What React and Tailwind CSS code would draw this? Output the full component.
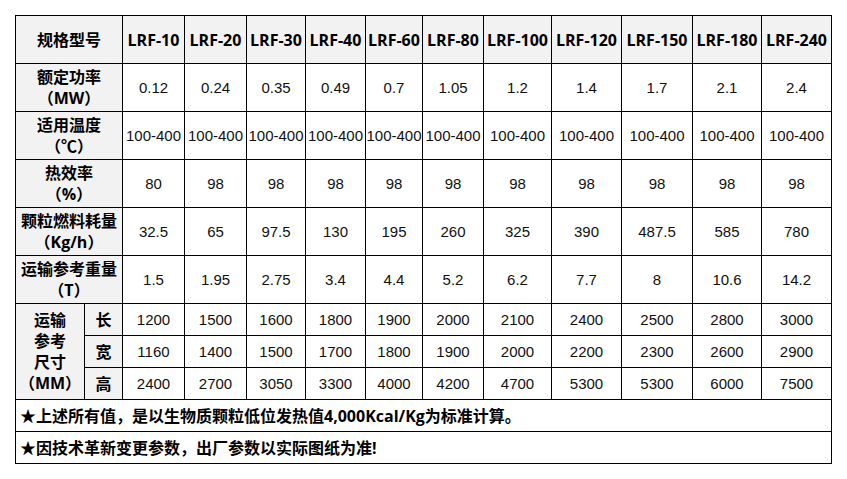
import React from "react";

const models = ["LRF-10","LRF-20","LRF-30","LRF-40","LRF-60","LRF-80","LRF-100","LRF-120","LRF-150","LRF-180","LRF-240"];
const rows = [
  { l1: "额定功率", l2: "（MW）", v: ["0.12","0.24","0.35","0.49","0.7","1.05","1.2","1.4","1.7","2.1","2.4"] },
  { l1: "适用温度", l2: "（℃）", v: Array(11).fill("100-400") },
  { l1: "热效率", l2: "（%）", v: ["80","98","98","98","98","98","98","98","98","98","98"] },
  { l1: "颗粒燃料耗量", l2: "（Kg/h）", v: ["32.5","65","97.5","130","195","260","325","390","487.5","585","780"] },
  { l1: "运输参考重量", l2: "（T）", v: ["1.5","1.95","2.75","3.4","4.4","5.2","6.2","7.7","8","10.6","14.2"] },
];
const dims = [
  { k: "长", v: ["1200","1500","1600","1800","1900","2000","2100","2400","2500","2800","3000"] },
  { k: "宽", v: ["1160","1400","1500","1700","1800","1900","2000","2200","2300","2600","2900"] },
  { k: "高", v: ["2400","2700","3050","3300","4000","4200","4700","5300","5300","6000","7500"] },
];

const bold = "font-['Open_Sans','Noto_Sans_CJK_SC',sans-serif] font-bold text-[16px] text-black";
const data = "bg-white flex items-center justify-center pt-[2px] font-['Liberation_Sans','Noto_Sans_CJK_SC',sans-serif] text-[15px] text-[#111] whitespace-nowrap";
const label = "bg-[#f2f2f2] flex flex-col items-center justify-center pt-px text-center leading-[21px] " + bold;

export default function App() {
  return (
    <div className="w-[847px] h-[479px] bg-white pt-[15px] pl-[15px]">
      <div className="inline-grid bg-black p-px gap-px grid-cols-[68px_37px_61px_61px_58px_59px_56px_60px_67px_69px_70px_68px_69px] grid-rows-[47px_47px_47px_47px_47px_47px_31px_31px_31px_31px_31px]">
        <div className={label + " col-span-2"}>规格型号</div>
        {models.map((m) => (
          <div key={m} className={"bg-[#f2f2f2] flex items-center justify-center pt-px whitespace-nowrap " + bold}>{m}</div>
        ))}
        {rows.map((r) => (
          <React.Fragment key={r.l1}>
            <div className={label + " col-span-2"}>
              <span>{r.l1}</span>
              <span>{r.l2}</span>
            </div>
            {r.v.map((x, i) => (
              <div key={i} className={data}>{x}</div>
            ))}
          </React.Fragment>
        ))}
        <div className={label + " row-span-3"}>
          <span>运输</span>
          <span>参考</span>
          <span>尺寸</span>
          <span>（MM）</span>
        </div>
        {dims.map((d) => (
          <React.Fragment key={d.k}>
            <div className={label}>{d.k}</div>
            {d.v.map((x, i) => (
              <div key={i} className={data}>{x}</div>
            ))}
          </React.Fragment>
        ))}
        <div className={"col-span-full bg-white flex items-center pl-[4px] pt-px whitespace-nowrap " + bold}>
          ★上述所有值，是以生物质颗粒低位发热值4,000Kcal/Kg为标准计算。
        </div>
        <div className={"col-span-full bg-white flex items-center pl-[4px] pt-px whitespace-nowrap " + bold}>
          ★因技术革新变更参数，出厂参数以实际图纸为准!
        </div>
      </div>
    </div>
  );
}
